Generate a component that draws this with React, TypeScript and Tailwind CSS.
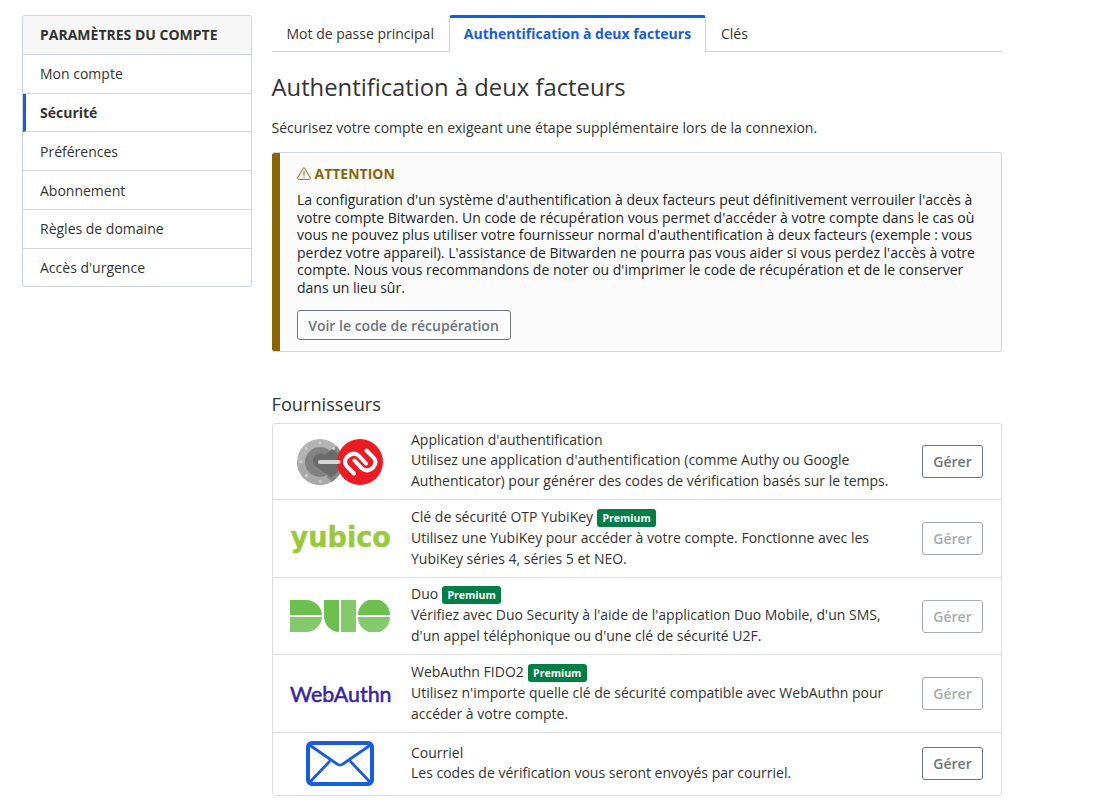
import type { ReactNode } from "react";

function AuthenticatorLogo() {
  return (
    <svg width="88" height="48" viewBox="0 0 88 48" aria-hidden="true">
      <circle cx="24" cy="24" r="23" fill="#b3b3b3" />
      <path d="M1 24a23 23 0 0 0 46 0z" fill="#a9a9a9" />
      <circle cx="24" cy="24" r="15" fill="#828282" />
      <path d="M35 13.500 40.500 8A23 23 0 0 1 35.500 44L31 39l6-13z" fill="#878787" />
      <path d="M17.500 20a7.500 7.500 0 0 1 11.500-2.500L36 11q9 6 9 14-2 10-10 14.500L18.500 27.500q-2.500-3.500-1-7.500z" fill="#6b6b6b" />
      <g fill="#cdcdcd">
        <circle cx="24" cy="4.800" r="1.500" />
        <circle cx="10.400" cy="10.400" r="1.500" />
        <circle cx="37.600" cy="10.400" r="1.500" />
        <circle cx="4.800" cy="24" r="1.500" />
        <circle cx="10.400" cy="37.600" r="1.500" />
        <circle cx="24" cy="43.200" r="1.500" />
      </g>
      <circle cx="64" cy="24" r="23" fill="#ec1c24" />
      <path d="M24 24h18.500" stroke="#d6d6d6" strokeWidth="4" strokeLinecap="round" />
      <g fill="none" stroke="#fff" strokeWidth="4" strokeLinecap="round">
        <path d="M58 35.500 51 28.500Q47 24 51 19 57 13 62.500 17.500L70 25.500" />
        <path d="M70.500 12.500 77.500 19.500Q81.500 24 77.500 29 71.500 35 66 30.500L58.500 22.500" />
      </g>
    </svg>
  );
}

function YubicoLogo() {
  return (
    <svg width="106" height="44" viewBox="0 0 106 44" className="overflow-visible" aria-label="yubico">
      <text x="3.500" y="30" textLength="100.500" lengthAdjust="spacingAndGlyphs" fill="#9aca3c" stroke="#9aca3c" strokeWidth="0.400" fontFamily="DejaVu Sans, sans-serif" fontWeight="700" fontSize="27.500">yubico</text>
    </svg>
  );
}

function DuoLogo() {
  return (
    <svg width="100" height="32" viewBox="0 0 100 32" aria-hidden="true">
      <path d="M0 0h16a16 16 0 0 1 16 15H0z" fill="#6dbf50" />
      <path d="M0 17h32a16 16 0 0 1-16 15H0z" fill="#84c96c" />
      <path d="M34 0h15v32a15 16 0 0 1-15-16z" fill="#6dbf50" />
      <path d="M51 0h15v32H51z" fill="#84c96c" />
      <path d="M68 15a16 16 0 0 1 32 0z" fill="#6dbf50" />
      <path d="M68 17a16 16 0 0 0 32 0z" fill="#84c96c" />
    </svg>
  );
}

function WebAuthnLogo() {
  return (
    <svg width="110" height="40" viewBox="0 0 110 40" className="overflow-visible" aria-label="WebAuthn">
      <text x="5" y="28" textLength="101.500" lengthAdjust="spacingAndGlyphs" fill="#3423a6" stroke="#3423a6" strokeWidth="0.500" fontFamily="Lato, sans-serif" fontWeight="400" fontSize="21.500">WebAuthn</text>
      <path d="M37.500 23h8" stroke="#f2b49a" strokeWidth="1.500" strokeDasharray="2 0.700" />
    </svg>
  );
}

function EmailLogo() {
  return (
    <svg width="68" height="45" viewBox="0 0 68 45" fill="none" stroke="#175ddc" aria-hidden="true">
      <rect x="2" y="2" width="64" height="41" rx="4" strokeWidth="4" />
      <path d="m3.500 4 27.500 19q3 2.300 6 0L64.500 4M4 41l20-21M64 41 44 20" strokeWidth="2.800" />
    </svg>
  );
}

function WarningIcon() {
  return (
    <svg width="14" height="13" viewBox="0 0 14 13" fill="none" stroke="#8b6609" strokeLinecap="round" aria-hidden="true">
      <path d="M6.300 1.100q.7-.8 1.400 0l5.600 10q.3 1.200-.8 1.300H1.500Q.4 12.300.7 11.100z" strokeWidth="0.900" />
      <path d="M7 4.300v4M7 10v.3" strokeWidth="1" />
    </svg>
  );
}

const menu = [
  { label: "Mon compte", height: "h-[39px] pb-[2px]" },
  { label: "Sécurité", height: "h-[38px]", active: true },
  { label: "Préférences", height: "h-[39px]" },
  { label: "Abonnement", height: "h-[39px]" },
  { label: "Règles de domaine", height: "h-[39px] pb-[2px]" },
  { label: "Accès d'urgence", height: "h-[37px]" },
];

type Provider = {
  name: string;
  description: string;
  logo: ReactNode;
  height: string;
  titleBox: string;
  textPadding: string;
  premium?: boolean;
};

const providers: Provider[] = [
  { name: "Application d'authentification", description: "Utilisez une application d'authentification (comme Authy ou Google Authenticator) pour générer des codes de vérification basés sur le temps.", logo: <AuthenticatorLogo />, height: "h-[76px]", titleBox: "h-[20px] pt-[2px]", textPadding: "pb-[3px]" },
  { name: "Clé de sécurité OTP YubiKey", description: "Utilisez une YubiKey pour accéder à votre compte. Fonctionne avec les YubiKey séries 4, séries 5 et NEO.", logo: <YubicoLogo />, height: "h-[78px]", titleBox: "h-[21px]", textPadding: "pb-[2px]", premium: true },
  { name: "Duo", description: "Vérifiez avec Duo Security à l'aide de l'application Duo Mobile, d'un SMS, d'un appel téléphonique ou d'une clé de sécurité U2F.", logo: <DuoLogo />, height: "h-[77px]", titleBox: "h-[21px]", textPadding: "pb-[3px]", premium: true },
  { name: "WebAuthn FIDO2", description: "Utilisez n'importe quelle clé de sécurité compatible avec WebAuthn pour accéder à votre compte.", logo: <WebAuthnLogo />, height: "h-[78px]", titleBox: "h-[21px]", textPadding: "pb-[2px]", premium: true },
  { name: "Courriel", description: "Les codes de vérification vous seront envoyés par courriel.", logo: <EmailLogo />, height: "h-[62px] pb-px", titleBox: "h-[20px] pt-[2px]", textPadding: "pb-[2px]" },
];

function ProviderRow({ name, description, logo, height, titleBox, textPadding, premium }: Provider) {
  return (
    <li className={`flex items-center border-b border-[#dddddd] pr-[18px] last:border-b-0 ${height}`}>
      <div className="flex w-[134px] shrink-0 items-center justify-center">{logo}</div>
      <div className={`w-[490px] pl-1 ${textPadding}`}>
        <h3 className={`flex items-center gap-1 leading-[20px] ${titleBox}`}>
          {name}
          {premium && (
            <span className="mt-[2px] h-[18px] rounded-[3px] bg-[#017e45] px-[5.3px] text-[10.5px] leading-[18px] font-bold text-white">Premium</span>
          )}
        </h3>
        <p className="leading-[21px]">{description}</p>
      </div>
      <button
        disabled={premium}
        className="ml-auto h-[33px] w-[61px] rounded-[3px] border border-[#6c757d] font-semibold text-[#6c757d] disabled:opacity-60"
      >
        Gérer
      </button>
    </li>
  );
}

export default function App() {
  return (
    <div className="flex h-[808px] w-[1102px] items-start gap-5 overflow-hidden bg-white pt-[15px] pl-[22px] font-['Open_Sans',sans-serif] text-[14px] leading-[21px] text-[#333333]">
      <nav className="w-[230px] shrink-0 overflow-hidden rounded-[3px] border border-[#ced4dc]">
        <h2 className="flex h-[39px] items-center border-b border-[#ced4dc] bg-[#f7f7f7] pb-[2px] pl-[17px] font-bold">
          PARAMÈTRES DU COMPTE
        </h2>
        <ul>
          {menu.map((item) => (
            <li
              key={item.label}
              className={`flex items-center border-b border-b-[#d5d8dc] last:border-b-0 ${item.height} ${item.active ? "border-l-[3px] border-l-[#175ddc] pl-[14px] font-bold" : "pl-[17px]"}`}
            >
              {item.label}
            </li>
          ))}
        </ul>
      </nav>

      <main className="w-[730px]">
        <div className="flex h-[37px] leading-[21px]">
          <div className="w-[177px] border-b border-[#ced4dc] pt-[8px] pl-[14.5px]">Mot de passe principal</div>
          <div className="w-[257px] rounded-t-[3px] border-x border-t-[3px] border-x-[#ced4dc] border-t-[#175ddc] pt-[5px] text-center font-bold text-[#175ddc]">
            Authentification à deux facteurs
          </div>
          <div className="grow border-b border-[#ced4dc] pt-[8px] pl-[15px]">Clés</div>
        </div>
        <h1 className="mt-[21px] -ml-[0.5px] text-[23.8px] leading-[28px]">Authentification à deux facteurs</h1>
        <p className="mt-[16px] -ml-[0.5px]">Sécurisez votre compte en exigeant une étape supplémentaire lors de la connexion.</p>

        <section className="mt-[14px] flex h-[200px] overflow-hidden rounded-[3px] border border-l-0 border-[#ced4dc] bg-[#fbfbfb]">
          <div className="w-2 shrink-0 bg-[#8b6609]" />
          <div className="grow pt-[11px] pr-[17px] pl-[17px]">
            <h2 className="flex h-[18px] items-center gap-[3.5px] font-bold text-[#8b6609]">
              <WarningIcon />
              ATTENTION
            </h2>
            <p className="mt-[9px] leading-[17.5px] text-[#212529]">
              La configuration d'un système d'authentification à deux facteurs peut définitivement verrouiler l'accès à votre compte Bitwarden. Un code de récupération vous permet d'accéder à votre compte dans le cas où vous ne pouvez plus utiliser votre fournisseur normal d'authentification à deux facteurs (exemple : vous perdez votre appareil). L'assistance de Bitwarden ne pourra pas vous aider si vous perdez l'accès à votre compte. Nous vous recommandons de noter ou d'imprimer le code de récupération et de le conserver dans un lieu sûr.
            </p>
            <button className="mt-[14px] h-[30px] w-[214px] rounded-[3px] border border-[#6c757d] pr-px font-semibold text-[#6c757d]">
              Voir le code de récupération
            </button>
          </div>
        </section>

        <h2 className="mt-[42px] -ml-[0.5px] text-[18.2px] leading-[21px]">Fournisseurs</h2>
        <ul className="mt-[8px] rounded-[3px] border border-[#dddddd]">
          {providers.map((provider) => (
            <ProviderRow key={provider.name} {...provider} />
          ))}
        </ul>
      </main>
    </div>
  );
}
